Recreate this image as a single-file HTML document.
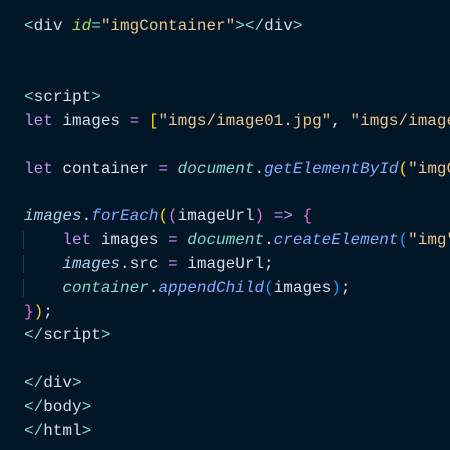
<!DOCTYPE html>
<html><head><meta charset="utf-8"><style>
html,body{margin:0;padding:0;width:450px;height:450px;overflow:hidden;background:#011627;}
pre{margin:0;padding:15px 0 0 24px;width:426px;height:435px;overflow:hidden;font-family:"Liberation Mono",monospace;font-size:16px;line-height:23.8px;color:#d6deeb;white-space:pre;}
.t{color:#7fdbca}.a{color:#addb67;font-style:italic}.s{color:#ecc48d}.k{color:#c792ea}.f{color:#82aaff;font-style:italic}.v{color:#7fdbca;font-style:italic}.i{color:#a9d4ec;font-style:italic}.y{color:#ffd700}.p{color:#da70d6}.b{color:#179fff}.o{color:#c792ea}
.g{border-left:1px solid #2a3a4a;margin-left:-1px}
</style></head><body><pre><span class="t">&lt;</span>div <span class="a">id</span><span class="t">=</span><span class="s">"imgContainer"</span><span class="t">&gt;&lt;/</span>div<span class="t">&gt;</span>


<span class="t">&lt;</span>script<span class="t">&gt;</span>
<span class="k">let</span> images <span class="o">=</span> <span class="y">[</span><span class="s">"imgs/image01.jpg"</span>, <span class="s">"imgs/image02.jpg"</span>

<span class="k">let</span> container <span class="o">=</span> <span class="v">document</span>.<span class="f">getElementById</span><span class="y">(</span><span class="s">"imgContainer"</span>

<span class="i">images</span>.<span class="f">forEach</span><span class="y">(</span><span class="p">(</span>imageUrl<span class="p">)</span> <span class="k">=&gt;</span> <span class="p">{</span>
<span class="g">    </span><span class="k">let</span> images <span class="o">=</span> <span class="v">document</span>.<span class="f">createElement</span><span class="b">(</span><span class="s">"img"</span><span class="b">)</span>
<span class="g">    </span><span class="i">images</span>.src <span class="o">=</span> imageUrl;
<span class="g">    </span><span class="v">container</span>.<span class="f">appendChild</span><span class="b">(</span>images<span class="b">)</span>;
<span class="p">}</span><span class="y">)</span>;
<span class="t">&lt;/</span>script<span class="t">&gt;</span>

<span class="t">&lt;/</span>div<span class="t">&gt;</span>
<span class="t">&lt;/</span>body<span class="t">&gt;</span>
<span class="t">&lt;/</span>html<span class="t">&gt;</span></pre></body></html>
